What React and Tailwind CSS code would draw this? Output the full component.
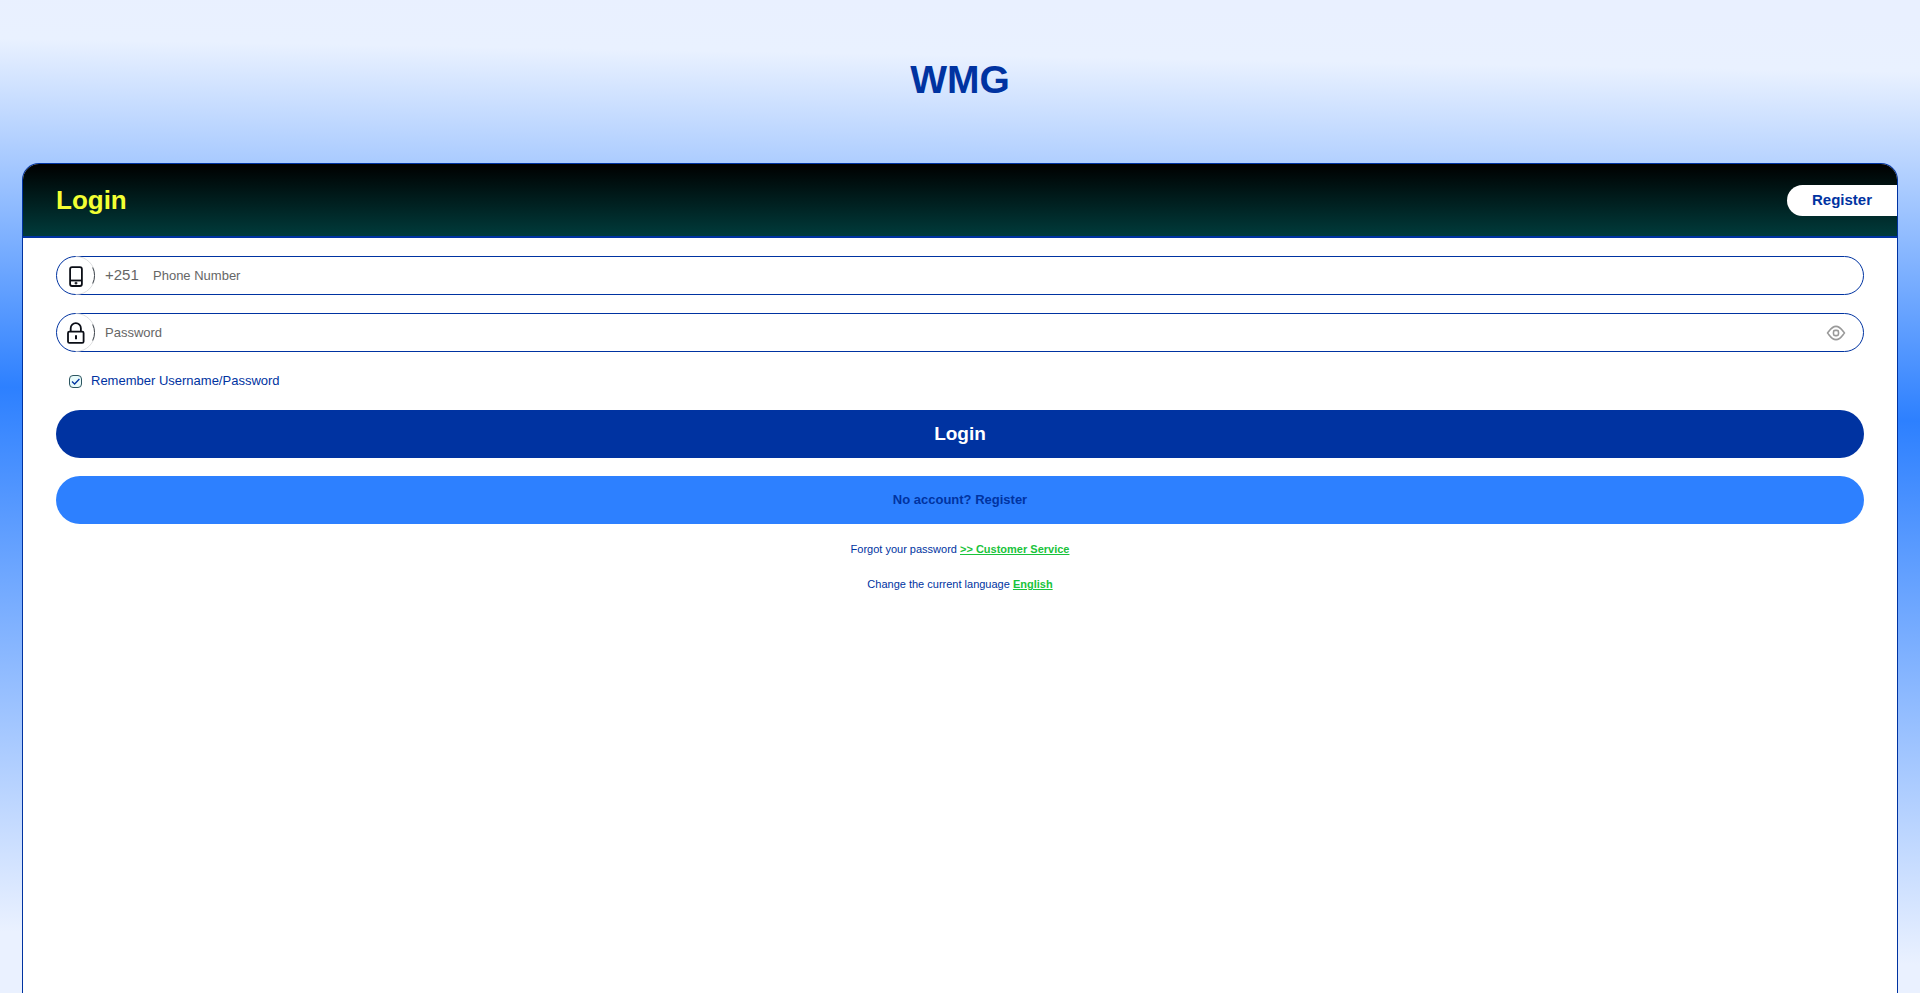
import { useState } from "react";

function PhoneIcon() {
  return (
    <g stroke="#0b0e16" strokeWidth="1.800">
      <rect x="14.100" y="11.200" width="11.800" height="18.800" rx="2" />
      <path d="M14.500 24.500h11" />
      <path d="M20 25.800v2.800M18.600 27.200h2.800" strokeWidth="1.200" />
    </g>
  );
}

function LockIcon() {
  return (
    <g stroke="#0b0e16" strokeWidth="1.800">
      <rect x="12" y="18.600" width="15.600" height="11.200" rx="1.400" />
      <path d="M14.700 18.400v-3.100a5.100 5.100 0 0 1 10.200 0v3.100" />
      <path d="M20 22.300v4" strokeWidth="2" />
    </g>
  );
}

function EyeIcon() {
  return (
    <svg viewBox="0 0 20 16" className="h-4 w-5" fill="none" stroke="#999999" strokeWidth="1.6" aria-hidden="true">
      <path
        d="M1.500 8C3.300 6.200 5.400 1.400 10 1.400S16.700 6.200 18.500 8C16.700 9.800 14.600 14.600 10 14.600S3.300 9.800 1.500 8Z"
        strokeLinejoin="round"
      />
      <rect x="7.500" y="5.400" width="5" height="5.200" rx="1.600" />
    </svg>
  );
}

function Badge({ children }) {
  return (
    <svg viewBox="0 0 39 39" className="-my-px -ml-px size-[39px] shrink-0" fill="none" aria-hidden="true">
      <path d="M20 0.500A19 19 0 0 1 20 38.500" stroke="#d4d6d8" strokeWidth="0.800" />
      <path d="M36.700 11.500A19 19 0 0 1 36.700 27.500" stroke="#3f454d" strokeWidth="1" />
      {children}
    </svg>
  );
}

const field = "flex h-[39px] items-center rounded-full border border-[#0033a1] bg-white";
const input =
  "h-full min-w-0 flex-1 bg-transparent text-[13px] text-[#333333] outline-none placeholder:text-[#666666]";

export default function App() {
  const [show, setShow] = useState(false);
  return (
    <div className="flex min-h-screen flex-col bg-[linear-gradient(181deg,#e9f0ff_2%,#e9f1ff_7%,#2d80ff_41%,#eaf1ff_94%)] px-[22px] font-['Liberation_Sans',Arial,sans-serif] text-[#0033a1]">
      <header className="flex h-[163px] items-center justify-center pb-1">
        <h1 className="text-[39px] leading-none font-bold">WMG</h1>
      </header>
      <main className="flex flex-1 flex-col overflow-hidden rounded-t-[17px] border border-b-0 border-[#0033a1] bg-white">
        <div className="flex h-[74px] items-center justify-between border-b-2 border-[#0033a1] bg-[linear-gradient(180deg,#000000,#003b3b)] pl-[33px]">
          <h2 className="text-[26px] leading-none font-bold text-[#f3ff33]">Login</h2>
          <a
            href="#register"
            className="flex h-[31px] w-[110px] items-center justify-center rounded-l-full bg-white text-[15px] font-bold"
          >
            Register
          </a>
        </div>
        <form className="flex flex-col gap-[18px] px-[33px] pt-[18px]" onSubmit={(e) => e.preventDefault()}>
          <div className={field}>
            <Badge>
              <PhoneIcon />
            </Badge>
            <span className="ml-[10px] w-12 text-[15px] text-[#666666]">+251</span>
            <input className={input} type="tel" aria-label="Phone Number" placeholder="Phone Number" />
          </div>
          <div className={field}>
            <Badge>
              <LockIcon />
            </Badge>
            <input
              className={input + " ml-[10px]"}
              type={show ? "text" : "password"}
              aria-label="Password"
              placeholder="Password"
            />
            <button type="button" aria-label="Show password" className="mr-[17px]" onClick={() => setShow(!show)}>
              <EyeIcon />
            </button>
          </div>
          <label className="flex h-[22px] items-center gap-2 self-start pl-3 text-[13px]">
            <span className="relative flex size-[15px]">
              <input
                type="checkbox"
                defaultChecked
                className="peer m-px size-[13px] appearance-none rounded-[4px] border border-[#2c5560] bg-[#e8fafa]"
              />
              <svg
                viewBox="0 0 15 15"
                className="pointer-events-none absolute inset-0 hidden size-full peer-checked:block"
                fill="none"
                stroke="#0033a1"
                strokeWidth="1.3"
                aria-hidden="true"
              >
                <path d="M4 7.600l2.600 2.400L11.400 5" />
              </svg>
            </span>
            Remember Username/Password
          </label>
          <button type="submit" className="h-12 rounded-full bg-[#0033a1] text-[19px] font-bold text-white">
            Login
          </button>
          <button type="button" className="h-12 rounded-full bg-[#2d80ff] text-[13px] font-bold">
            No account? Register
          </button>
          <div className="flex flex-col gap-[21px] text-center text-[11px] leading-[14px]">
            <p>
              Forgot your password{" "}
              <a href="#service" className="font-bold text-[#19c33b] underline">
                &gt;&gt; Customer Service
              </a>
            </p>
            <p>
              Change the current language{" "}
              <a href="#language" className="font-bold text-[#19c33b] underline">
                English
              </a>
            </p>
          </div>
        </form>
      </main>
    </div>
  );
}
